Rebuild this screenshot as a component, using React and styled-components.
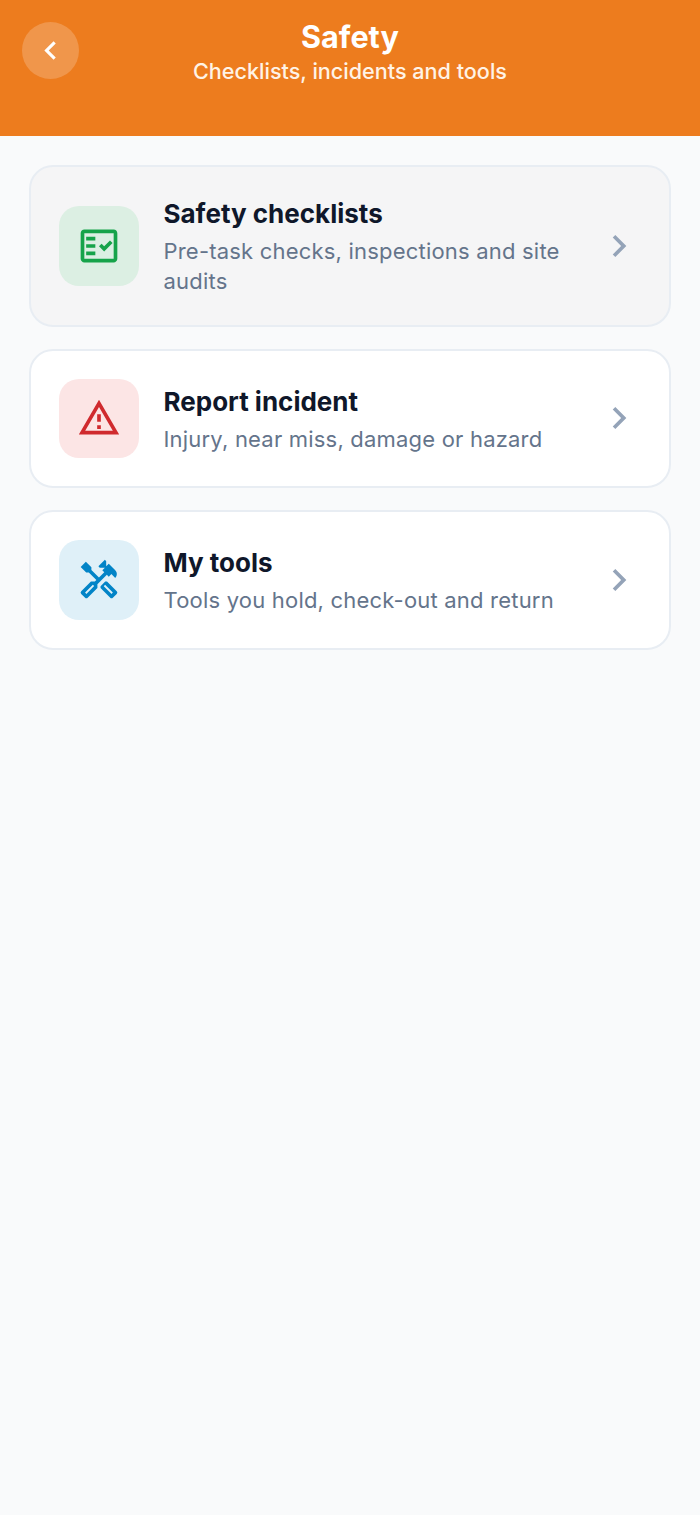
import styled, { createGlobalStyle } from "styled-components";
import { MdOutlineFactCheck, MdOutlineReportProblem, MdOutlineHandyman, MdChevronRight, MdChevronLeft } from "react-icons/md";

const items = [
  {
    id: "checklists",
    title: "Safety checklists",
    description: "Pre-task checks, inspections and site audits",
    Icon: MdOutlineFactCheck,
    tint: "#dcefe3",
    color: "#16a34a",
    pressed: true,
  },
  {
    id: "incident",
    title: "Report incident",
    description: "Injury, near miss, damage or hazard",
    Icon: MdOutlineReportProblem,
    tint: "#fce5e5",
    color: "#d02a2e",
  },
  {
    id: "tools",
    title: "My tools",
    description: "Tools you hold, check-out and return",
    Icon: MdOutlineHandyman,
    tint: "#dff0f8",
    color: "#0284c7",
  },
];

export default function App() {
  return (
    <Page>
      <GlobalStyle />
      <Header>
        <BackButton aria-label="Back">
          <MdChevronLeft size={37} />
        </BackButton>
        <div className="titles">
          <div className="title">Safety</div>
          <div className="subtitle">Checklists, incidents and tools</div>
        </div>
      </Header>
      <List>
        {items.map(({ id, title, description, Icon, tint, color, pressed }) => (
          <Card key={id} $pressed={pressed}>
            <IconTile $tint={tint} $color={color}>
              <Icon size={44} />
            </IconTile>
            <Info>
              <div className="title">{title}</div>
              <div className="description">{description}</div>
            </Info>
            <Arrow>
              <MdChevronRight size={44} />
            </Arrow>
          </Card>
        ))}
      </List>
    </Page>
  );
}

const GlobalStyle = createGlobalStyle`
  html, body {
    margin: 0;
    padding: 0;
    background: #f9fafb;
    font-family: Inter, "Noto Sans", sans-serif;
  }
`;

const Page = styled.div`
  min-height: 1515px;
  background: #f9fafb;
`;

const Header = styled.div`
  position: relative;
  height: 136px;
  box-sizing: border-box;
  padding-top: 18px;
  background: #ed7c1e;
  color: #fff;
  text-align: center;

  .title {
    font-size: 30.6px;
    line-height: 38px;
    font-weight: 700;
  }

  .subtitle {
    margin-top: 1px;
    font-size: 21.6px;
    line-height: 28px;
    font-weight: 500;
    color: #fff3e6;
  }
`;

const BackButton = styled.button`
  position: absolute;
  left: 22px;
  top: 22px;
  width: 57px;
  height: 57px;
  padding: 0;
  border: none;
  border-radius: 50%;
  display: flex;
  align-items: center;
  justify-content: center;
  background: rgba(255, 255, 255, 0.2);
  color: #fff;
`;

const List = styled.div`
  display: flex;
  flex-direction: column;
  gap: 22px;
  padding: 29px 29px 0;
`;

const Card = styled.div`
  display: flex;
  align-items: center;
  gap: 25px;
  padding: 28px;
  border: 2px solid #e8edf3;
  border-radius: 24px;
  background: ${(p) => (p.$pressed ? "#f5f5f6" : "#fff")};
`;

const IconTile = styled.div`
  flex: none;
  width: 79.5px;
  height: 79.5px;
  border-radius: 20px;
  display: flex;
  align-items: center;
  justify-content: center;
  background: ${(p) => p.$tint};
  color: ${(p) => p.$color};
`;

const Info = styled.div`
  flex: 1;
  min-width: 0;

  .title {
    font-size: 26px;
    line-height: 38px;
    font-weight: 700;
    color: #0f172a;
  }

  .description {
    margin-top: 3px;
    font-size: 22px;
    line-height: 30.25px;
    letter-spacing: 0.2px;
    color: #64748b;
  }
`;

const Arrow = styled.div`
  flex: none;
  display: flex;
  color: #94a3b8;
`;
